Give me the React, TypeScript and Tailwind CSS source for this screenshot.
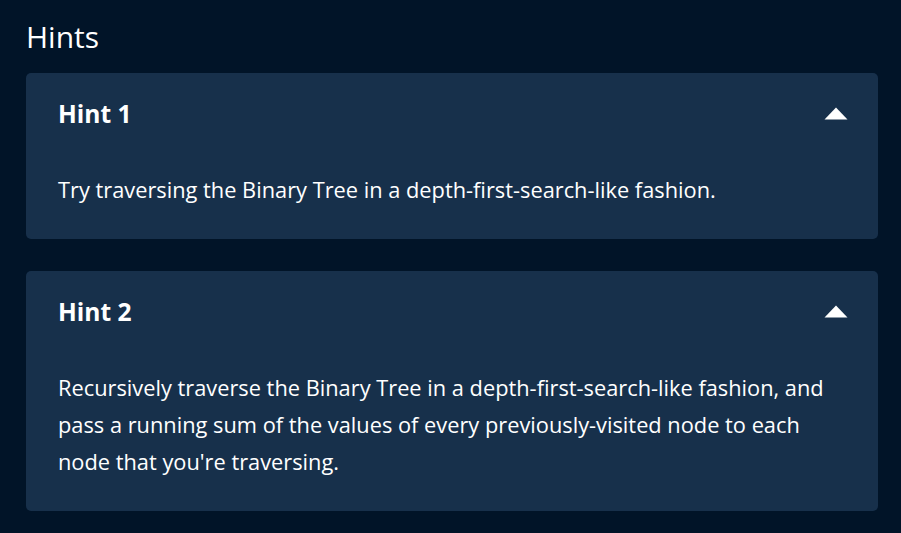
const hints = [
  {
    title: "Hint 1",
    body: "Try traversing the Binary Tree in a depth-first-search-like fashion.",
  },
  {
    title: "Hint 2",
    body: "Recursively traverse the Binary Tree in a depth-first-search-like fashion, and pass a running sum of the values of every previously-visited node to each node that you're traversing.",
  },
];

function Caret() {
  return (
    <svg width="24" height="13" viewBox="0 0 24 13" className="shrink-0">
      <path d="M12 0.5 L23.5 12.5 L0.5 12.5 Z" fill="#ffffff" />
    </svg>
  );
}

function HintCard({ title, body }: { title: string; body: string }) {
  return (
    <div className="rounded-[5px] bg-[#17304b] px-8 pt-[25px] pb-[31px]">
      <div className="flex items-center justify-between">
        <h3 className="text-[24.6px] font-bold leading-[32px] text-white">{title}</h3>
        <div className="-mr-[2px] pb-[1px]">
          <Caret />
        </div>
      </div>
      <p className="mt-[41px] pr-[20px] text-[21.8px] leading-[37px] text-white">{body}</p>
    </div>
  );
}

export default function App() {
  return (
    <div
      className="min-h-screen w-full bg-[#011428] px-[26px] pt-[17px] pb-6"
      style={{ fontFamily: '"Open Sans", "Noto Sans", sans-serif' }}
    >
      <h2 className="text-[30px] leading-[40px] text-white">Hints</h2>
      <div className="mt-[16px] flex w-[852px] flex-col gap-[32px]">
        {hints.map((h) => (
          <HintCard key={h.title} {...h} />
        ))}
      </div>
    </div>
  );
}
